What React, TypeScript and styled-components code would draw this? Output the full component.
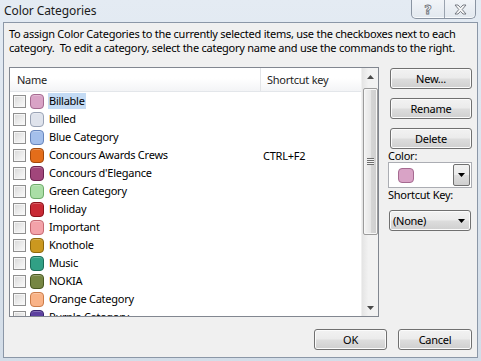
import React from 'react';
import styled, { createGlobalStyle } from 'styled-components';

const GlobalStyle = createGlobalStyle`
  html, body {
    margin: 0;
    padding: 0;
  }
  body {
    width: 481px;
    height: 361px;
    overflow: hidden;
    font-family: 'Noto Sans', 'Open Sans', sans-serif;
    font-size: 11px;
    letter-spacing: -0.25px;
    color: #000;
  }
`;

const Window = styled.div`
  box-sizing: border-box;
  width: 481px;
  height: 361px;
  padding: 0 3px 3px 3px;
  display: flex;
  flex-direction: column;
  background: linear-gradient(180deg, #e4ebf3 0%, #d9e2ec 60%, #d3dde8 100%);
`;

const TitleBar = styled.div`
  height: 22px;
  display: flex;
  justify-content: space-between;
  align-items: flex-start;
`;

const Title = styled.div`
  padding-left: 1px;
  line-height: 22px;
  font-size: 12px;
  letter-spacing: -0.1px;
  color: #1b1b1b;
`;

const CaptionGroup = styled.div`
  display: flex;
  margin-right: 2px;
  border: 1px solid #8a94a2;
  border-top: none;
  border-radius: 0 0 5px 5px;
  overflow: hidden;
  background: linear-gradient(180deg, #f1f4f8 0%, #e2e8ef 100%);
  box-shadow: inset 0 -1px 0 #f8fafc;
`;

const CaptionButton = styled.div<{ $w: number; $divider?: boolean }>`
  width: ${(p) => p.$w}px;
  height: 18px;
  display: flex;
  align-items: center;
  justify-content: center;
  border-right: ${(p) => (p.$divider ? '1px solid #9aa3af' : 'none')};
`;

const HelpGlyph = styled.span`
  font-family: 'DejaVu Sans', sans-serif;
  font-weight: bold;
  font-size: 13px;
  line-height: 1;
  color: #fafafa;
  -webkit-text-stroke: 0.8px #6a6f76;
`;

const Client = styled.div`
  flex: 1;
  display: flex;
  flex-direction: column;
  border: 1px solid #8b97a7;
  background: #f0f0f0;
  padding: 4px 5px 7px 5px;
`;

const Intro = styled.p`
  margin: 0;
  line-height: 14px;
  white-space: nowrap;
  color: #000;
`;

const Main = styled.div`
  display: flex;
  gap: 9px;
  margin-top: 12px;
`;

const ListBox = styled.div`
  width: 370px;
  height: 250px;
  box-sizing: border-box;
  border: 1px solid #828790;
  background: #fff;
  display: flex;
  overflow: hidden;
`;

const Table = styled.div`
  flex: 1;
  display: flex;
  flex-direction: column;
  overflow: hidden;
`;

const Header = styled.div`
  display: flex;
  height: 24px;
  flex-shrink: 0;
  box-sizing: border-box;
  border-bottom: 1px solid #e3e6ea;
  background: linear-gradient(180deg, #ffffff 0%, #ffffff 45%, #f3f4f6 100%);
`;

const HeaderCell = styled.div<{ $w?: number; $divider?: boolean }>`
  ${(p) => (p.$w ? `width: ${p.$w}px;` : 'flex: 1;')}
  box-sizing: border-box;
  display: flex;
  align-items: center;
  padding-left: ${(p) => (p.$divider ? 7 : 6)}px;
  border-right: ${(p) => (p.$divider ? '1px solid #e3e5e8' : 'none')};
  color: #1e1e1e;
`;

const Row = styled.div`
  display: flex;
  align-items: center;
  height: 18px;
  flex-shrink: 0;
`;

const NameCell = styled.div`
  width: 251px;
  display: flex;
  align-items: center;
  padding-left: 3px;
  box-sizing: border-box;
`;

const KeyCell = styled.div`
  flex: 1;
  padding-left: 2px;
  white-space: nowrap;
`;

const CheckBox = styled.span`
  width: 13px;
  height: 13px;
  box-sizing: border-box;
  border: 1px solid #8f8f8f;
  background: linear-gradient(135deg, #d8d8d8 0%, #eeeeee 60%, #fafafa 100%);
  box-shadow: inset 0 0 0 1px #f6f6f6;
  flex-shrink: 0;
`;

const Swatch = styled.span<{ $fill: string; $edge: string }>`
  width: 14px;
  height: 15px;
  margin-left: 4px;
  box-sizing: border-box;
  border: 1px solid ${(p) => p.$edge};
  border-radius: 4px;
  background: ${(p) => p.$fill};
  box-shadow: inset 0 1px 0 rgba(255, 255, 255, 0.25);
  flex-shrink: 0;
`;

const Label = styled.span<{ $selected?: boolean }>`
  margin-left: 4px;
  padding: 0 1px;
  line-height: 16px;
  white-space: nowrap;
  background: ${(p) => (p.$selected ? '#c4dbf4' : 'transparent')};
`;

const ScrollBar = styled.div`
  width: 17px;
  flex-shrink: 0;
  display: flex;
  flex-direction: column;
  background: linear-gradient(90deg, #e4e4e4 0%, #f2f2f2 40%, #f2f2f2 100%);
  border-left: 1px solid #f0f0f0;
  box-sizing: border-box;
`;

const ArrowButton = styled.div`
  height: 17px;
  display: flex;
  align-items: center;
  justify-content: center;
  flex-shrink: 0;
`;

const Track = styled.div`
  flex: 1;
  display: flex;
  flex-direction: column;
  align-items: center;
  padding-top: 3px;
`;

const Thumb = styled.div`
  width: 15px;
  height: 147px;
  box-sizing: border-box;
  border: 1px solid #9b9b9b;
  border-radius: 2px;
  background: linear-gradient(90deg, #f3f3f3 0%, #e6e6e6 50%, #d6d6d6 51%, #cfcfcf 100%);
  box-shadow: inset 0 0 0 1px #f7f7f7;
  display: flex;
  align-items: center;
  justify-content: center;
`;

const Grip = styled.div`
  width: 7px;
  height: 7px;
  background: repeating-linear-gradient(180deg, #6e6e6e 0px, #6e6e6e 1px, #f4f4f4 1px, #f4f4f4 2px);
`;

const Side = styled.div`
  width: 84px;
  display: flex;
  flex-direction: column;
  align-items: flex-start;
`;

const Button = styled.div<{ $w?: number }>`
  width: ${(p) => p.$w ?? 82}px;
  height: 21px;
  box-sizing: border-box;
  border: 1px solid #707070;
  border-radius: 3px;
  background: linear-gradient(180deg, #f2f2f2 0%, #ebebeb 48%, #dddddd 52%, #cfcfcf 100%);
  box-shadow: inset 0 0 0 1px #fbfbfb;
  display: flex;
  align-items: center;
  justify-content: center;
  color: #000;
  flex-shrink: 0;
`;

const SideButton = styled(Button)<{ $first?: boolean }>`
  margin-left: 2px;
  margin-top: ${(p) => (p.$first ? 1 : 9)}px;
`;

const FieldLabel = styled.div`
  line-height: 13px;
  white-space: nowrap;
`;

const ColorCombo = styled.div`
  width: 84px;
  height: 26px;
  box-sizing: border-box;
  border: 1px solid #abadb3;
  background: #fff;
  display: flex;
  align-items: center;
  justify-content: space-between;
  padding: 0 1px 0 9px;
`;

const ComboSwatch = styled.span`
  width: 16px;
  height: 15px;
  box-sizing: border-box;
  border: 1px solid #a56a90;
  border-radius: 4px;
  background: #d9a3c6;
`;

const DropButton = styled.div`
  width: 17px;
  height: 22px;
  box-sizing: border-box;
  border: 1px solid #707070;
  border-radius: 2px;
  background: linear-gradient(180deg, #f2f2f2 0%, #ebebeb 48%, #dddddd 52%, #cfcfcf 100%);
  display: flex;
  align-items: center;
  justify-content: center;
`;

const SelectBox = styled(Button)`
  width: 82px;
  margin-left: 1px;
  margin-top: 9px;
  justify-content: space-between;
  padding: 0 5px 0 3px;
`;

const Footer = styled.div`
  display: flex;
  justify-content: flex-end;
  gap: 11px;
  margin-top: 12px;
`;

const DownArrow = ({ color = '#000' }: { color?: string }) => (
  <svg width="7" height="4" viewBox="0 0 7 4">
    <polygon points="0,0 7,0 3.5,4" fill={color} />
  </svg>
);

const UpArrow = () => (
  <svg width="7" height="4" viewBox="0 0 7 4">
    <polygon points="0,4 7,4 3.5,0" fill="#4a4a4a" />
  </svg>
);

const CloseGlyph = () => (
  <svg width="13" height="11" viewBox="0 0 13 11">
    <polygon
      points="1,1 4,1 6.5,3.6 9,1 12,1 8.2,5.5 12,10 9,10 6.5,7.4 4,10 1,10 4.8,5.5"
      fill="#f7f7f7"
      stroke="#6b7079"
      strokeWidth="0.9"
      strokeLinejoin="round"
    />
  </svg>
);

type Category = {
  name: string;
  fill: string;
  edge: string;
  shortcut?: string;
  selected?: boolean;
};

const categories: Category[] = [
  { name: 'Billable', fill: '#d9a3c6', edge: '#a56a90', selected: true },
  { name: 'billed', fill: '#dfe3ec', edge: '#9aa3b5' },
  { name: 'Blue Category', fill: '#a4bfeb', edge: '#6886bd' },
  { name: 'Concours Awards Crews', fill: '#e36d1a', edge: '#a3480b', shortcut: 'CTRL+F2' },
  { name: "Concours d'Elegance", fill: '#a1467b', edge: '#6c2350' },
  { name: 'Green Category', fill: '#aadea6', edge: '#6dab69' },
  { name: 'Holiday', fill: '#c92a35', edge: '#8c111a' },
  { name: 'Important', fill: '#f3a2a9', edge: '#c66a73' },
  { name: 'Knothole', fill: '#cb981f', edge: '#8e680c' },
  { name: 'Music', fill: '#31a085', edge: '#1b6c58' },
  { name: 'NOKIA', fill: '#768643', edge: '#4a5922' },
  { name: 'Orange Category', fill: '#f9b387', edge: '#cb7c49' },
  { name: 'Purple Category', fill: '#5c40a0', edge: '#38246e' },
];

const App = () => {
  return (
    <>
      <GlobalStyle />
      <Window>
        <TitleBar>
          <Title>Color Categories</Title>
          <CaptionGroup>
            <CaptionButton $w={32} $divider>
              <HelpGlyph>?</HelpGlyph>
            </CaptionButton>
            <CaptionButton $w={30}>
              <CloseGlyph />
            </CaptionButton>
          </CaptionGroup>
        </TitleBar>
        <Client>
          <Intro>
            To assign Color Categories to the currently selected items, use the checkboxes next to each
            <br />
            category.&nbsp; To edit a category, select the category name and use the commands to the right.
          </Intro>
          <Main>
            <ListBox>
              <Table>
                <Header>
                  <HeaderCell $w={251} $divider>
                    Name
                  </HeaderCell>
                  <HeaderCell>Shortcut key</HeaderCell>
                </Header>
                {categories.map((c) => (
                  <Row key={c.name}>
                    <NameCell>
                      <CheckBox />
                      <Swatch $fill={c.fill} $edge={c.edge} />
                      <Label $selected={c.selected}>{c.name}</Label>
                    </NameCell>
                    <KeyCell>{c.shortcut}</KeyCell>
                  </Row>
                ))}
              </Table>
              <ScrollBar>
                <ArrowButton>
                  <UpArrow />
                </ArrowButton>
                <Track>
                  <Thumb>
                    <Grip />
                  </Thumb>
                </Track>
                <ArrowButton>
                  <DownArrow color="#4a4a4a" />
                </ArrowButton>
              </ScrollBar>
            </ListBox>
            <Side>
              <SideButton $first>New...</SideButton>
              <SideButton>Rename</SideButton>
              <SideButton>Delete</SideButton>
              <FieldLabel>Color:</FieldLabel>
              <ColorCombo>
                <ComboSwatch />
                <DropButton>
                  <DownArrow />
                </DropButton>
              </ColorCombo>
              <FieldLabel>Shortcut Key:</FieldLabel>
              <SelectBox>
                <span>(None)</span>
                <DownArrow />
              </SelectBox>
            </Side>
          </Main>
          <Footer>
            <Button $w={73}>OK</Button>
            <Button $w={74}>Cancel</Button>
          </Footer>
        </Client>
      </Window>
    </>
  );
};

export default App;
